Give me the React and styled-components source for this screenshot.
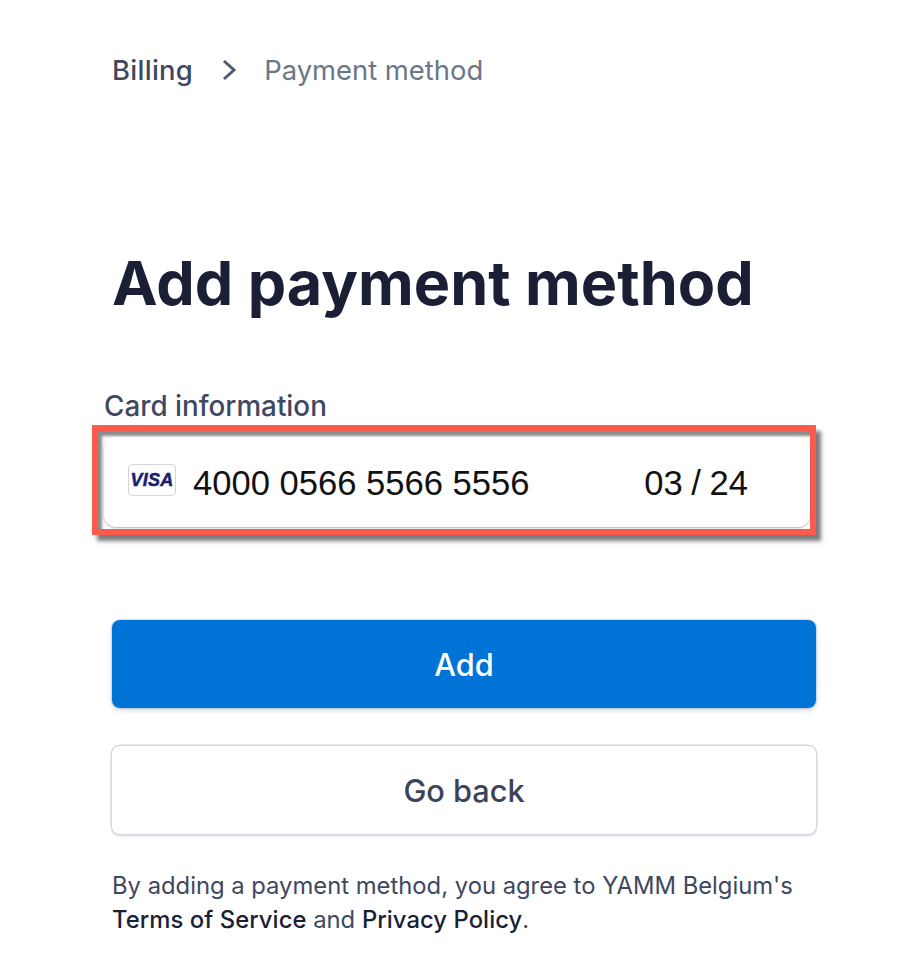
import React from 'react'
import styled, { createGlobalStyle } from 'styled-components'

const GlobalStyle = createGlobalStyle`
  html, body {
    margin: 0;
    padding: 0;
    background: #fff;
    font-family: Inter, "Liberation Sans", sans-serif;
  }
`

const Page = styled.main`
  width: 906px;
  height: 974px;
  box-sizing: border-box;
  padding: 52px 90px 0 112px;
  overflow: hidden;
`

const Breadcrumb = styled.nav`
  display: flex;
  align-items: center;
  height: 35px;
  font-size: 27.4px;
`

const Crumb = styled.span`
  color: ${props => (props.$current ? '#6b7689' : '#3f4860')};
  font-weight: ${props => (props.$current ? 400 : 500)};
  letter-spacing: ${props => (props.$current ? '0' : '0.3px')};
`

const Chevron = styled.svg`
  width: 18px;
  height: 26px;
  margin: 0 26px 0 27px;
  fill: none;
  stroke: #4f5b70;
  stroke-width: 3;
`

const Title = styled.h1`
  margin: 156px 0 0;
  font-size: 61.1px;
  line-height: 80px;
  font-weight: 700;
  color: #1a1f36;
`

const CardField = styled.section`
  margin: 66px 0 0 -20px;
`

const FieldLabel = styled.label`
  display: block;
  margin-left: 12px;
  font-size: 27.8px;
  line-height: 34px;
  font-weight: 500;
  color: #3f4860;
`

const Highlight = styled.div`
  margin-top: 2px;
  width: 724px;
  height: 110px;
  box-sizing: border-box;
  border: 6px solid #fd5a4e;
  background: #fff;
  box-shadow: 5px 6px 4px rgba(50, 50, 50, 0.65), inset 4px 5px 3px rgba(60, 60, 60, 0.6);
  padding: 6px 0 2px 6px;
`

const CardInput = styled.div`
  height: 100%;
  box-sizing: border-box;
  display: flex;
  align-items: center;
  padding: 2px 62px 0 24px;
  background: #fff;
  border-radius: 12px;
  box-shadow: 0 1px 2px rgba(60, 66, 87, 0.4);
  font-family: "Liberation Sans", Arial, sans-serif;
  font-size: 34.6px;
  color: #111;
`

const VisaBadge = styled.span`
  width: 48px;
  height: 32px;
  box-sizing: border-box;
  display: flex;
  align-items: center;
  justify-content: center;
  border: 1px solid #d5d6dc;
  border-radius: 4px;
  background: #fff;
  color: #1a1f71;
  font-size: 18px;
  font-weight: 700;
  font-style: italic;
  letter-spacing: 0.2px;
  -webkit-text-stroke: 0.5px #1a1f71;
  margin: 0 17px 6px 0;
`

const CardNumber = styled.span`
  flex: 1;
`

const CardExpiry = styled.span`
  word-spacing: -1px;
`

const Actions = styled.div`
  display: flex;
  flex-direction: column;
  gap: 37px;
  margin-top: 85px;
  width: 704px;
`

const Button = styled.button`
  height: 88px;
  margin-top: ${props => (props.$primary ? '0' : '1px')};
  border: 0;
  border-radius: 8px;
  font-family: inherit;
  font-size: 30.7px;
  font-weight: 500;
  color: ${props => (props.$primary ? '#fff' : '#3c4257')};
  background: ${props => (props.$primary ? '#0073d6' : '#fff')};
  box-shadow: ${props =>
    props.$primary
      ? '0 0 0 1px rgba(0, 90, 180, 0.12), 0 2px 5px rgba(60, 66, 87, 0.25)'
      : '0 0 0 1.5px #d8d9df, 0 2px 3px rgba(60, 66, 87, 0.2)'};
`

const Terms = styled.p`
  margin: 35px 0 0;
  font-size: 23.8px;
  line-height: 34px;
  color: #3f4860;

  strong {
    font-weight: 500;
    letter-spacing: 0.06px;
    color: #1a1f36;
  }
`

export default function App() {
  return (
    <>
      <GlobalStyle />
      <Page>
        <Breadcrumb>
          <Crumb>Billing</Crumb>
          <Chevron viewBox="0 0 18 26">
            <path d="M4 4l10 9-10 9" />
          </Chevron>
          <Crumb $current>Payment method</Crumb>
        </Breadcrumb>
        <Title>Add payment method</Title>
        <CardField>
          <FieldLabel>Card information</FieldLabel>
          <Highlight>
            <CardInput>
              <VisaBadge>VISA</VisaBadge>
              <CardNumber>4000 0566 5566 5556</CardNumber>
              <CardExpiry>03 / 24</CardExpiry>
            </CardInput>
          </Highlight>
        </CardField>
        <Actions>
          <Button $primary>Add</Button>
          <Button>Go back</Button>
        </Actions>
        <Terms>
          By adding a payment method, you agree to YAMM Belgium's
          <br />
          <strong>Terms of Service</strong> and <strong>Privacy Policy</strong>.
        </Terms>
      </Page>
    </>
  )
}
